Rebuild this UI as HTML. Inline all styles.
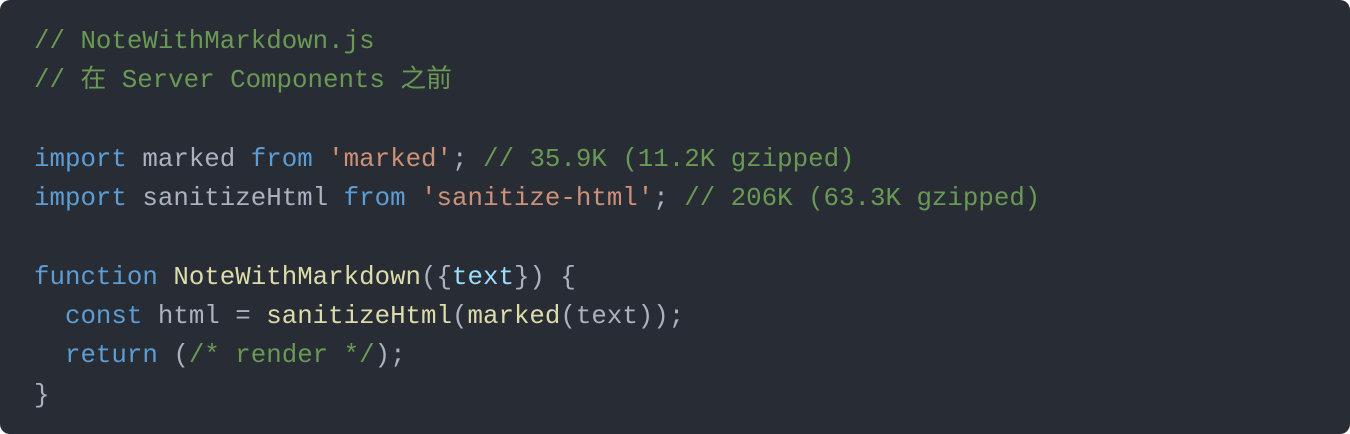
<!DOCTYPE html>
<html><head><meta charset="utf-8"><style>
html,body{margin:0;padding:0;background:#fff;}
.b{position:absolute;left:0;top:0;width:1350px;height:434px;background:#282c34;border-radius:10px;overflow:hidden;}
pre{margin:0;position:absolute;left:34px;top:22px;font-family:"Liberation Mono","Noto Sans CJK SC",monospace;font-size:25.8px;line-height:39.3px;color:#abb2bf;white-space:pre;}
.k{color:#5c9dd6}.s{color:#ce9178}.c{color:#6a9955}.f{color:#dcdcaa}.p{color:#9cdcfe}
</style></head><body><div class="b"><pre><span class="c">// NoteWithMarkdown.js</span>
<span class="c">// 在 Server Components 之前</span>

<span class="k">import</span> marked <span class="k">from</span> <span class="s">'marked'</span>; <span class="c">// 35.9K (11.2K gzipped)</span>
<span class="k">import</span> sanitizeHtml <span class="k">from</span> <span class="s">'sanitize-html'</span>; <span class="c">// 206K (63.3K gzipped)</span>

<span class="k">function</span> <span class="f">NoteWithMarkdown</span>({<span class="p">text</span>}) {
  <span class="k">const</span> html = <span class="f">sanitizeHtml</span>(<span class="f">marked</span>(text));
  <span class="k">return</span> (<span class="c">/* render */</span>);
}</pre></div></body></html>
